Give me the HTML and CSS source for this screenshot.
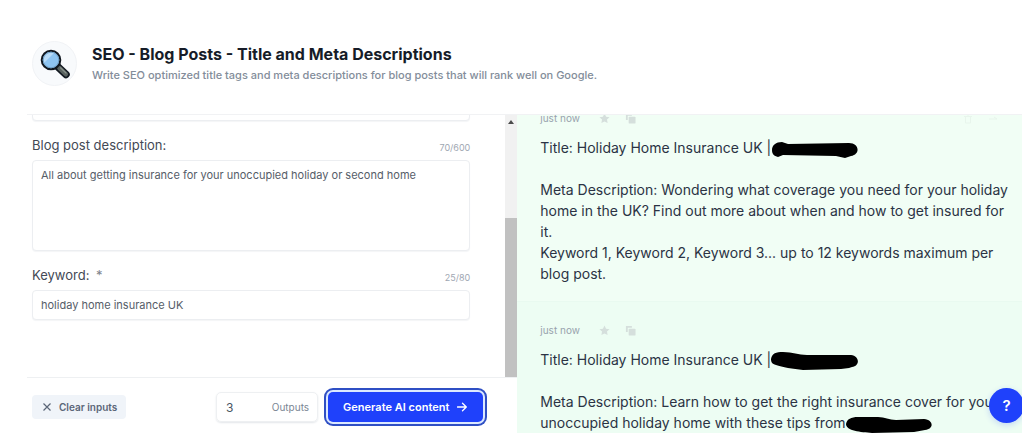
FILE: index.html
```html
<!DOCTYPE html>
<html lang="en">
<head>
    <meta charset="UTF-8">
    <meta name="viewport" content="width=device-width, initial-scale=1.0">
    <title>SEO - Blog Posts - Title and Meta Descriptions</title>
    <link rel="stylesheet" href="styles.css">
</head>
<body>
    <header class="header">
        <div class="tool-icon">
            <svg width="32" height="32" viewBox="0 0 32 32" aria-hidden="true">
                <path d="M18 18l9 8.500" stroke="#111820" stroke-width="7.500" stroke-linecap="round"/>
                <path d="M20.500 20.200l6.300 6" stroke="#59625f" stroke-width="4.600" stroke-linecap="round"/>
                <path d="M21.500 19.800l5.500 5.200" stroke="#87918b" stroke-width="1.200" stroke-linecap="round"/>
                <circle cx="12" cy="12" r="9.300" fill="#8ec5f2" stroke="#111820" stroke-width="2"/>
                <path d="M5 15a7.500 7.500 0 0 1 10-10z" fill="#b9dcf8"/>
                <circle cx="12" cy="12" r="7.800" fill="none" stroke="#6f9ec4" stroke-width="1"/>
            </svg>
        </div>
        <div>
            <h1 class="title">SEO - Blog Posts - Title and Meta Descriptions</h1>
            <p class="subtitle">Write SEO optimized title tags and meta descriptions for blog posts that will rank well on Google.</p>
        </div>
    </header>

    <main class="main">
        <form class="editor">
            <div class="editor-body">
                <div class="fields">
                    <input class="input" type="text" aria-label="Blog post title">
                    <div class="field-head">
                        <label for="description">Blog post description:</label>
                        <span class="counter">70/600</span>
                    </div>
                    <textarea class="input textarea" id="description">All about getting insurance for your unoccupied holiday or second home</textarea>
                    <div class="field-head">
                        <label for="keyword">Keyword: <span class="required">*</span></label>
                        <span class="counter">25/80</span>
                    </div>
                    <input class="input" type="text" id="keyword" value="holiday home insurance UK">
                </div>
                <div class="scrollbar">
                    <svg width="6" height="4" viewBox="0 0 6 4" aria-hidden="true"><path d="M0 4l3-4 3 4z" fill="#4b4b4b"/></svg>
                    <div class="thumb"></div>
                </div>
            </div>
            <div class="actions">
                <button class="clear" type="button">
                    <svg width="8" height="8" viewBox="0 0 8 8" aria-hidden="true"><path d="M.5.5l7 7M7.500.5l-7 7" stroke="#5b6678" stroke-width="1.200"/></svg>
                    Clear inputs
                </button>
                <div class="outputs">
                    <input id="outputs" type="text" value="3">
                    <label for="outputs">Outputs</label>
                </div>
                <button class="generate" type="button">
                    Generate AI content
                    <svg width="10" height="10" viewBox="0 0 10 10" aria-hidden="true"><path d="M.5 5h8.500M5.500 1.200L9.300 5 5.500 8.800" fill="none" stroke="#fff" stroke-width="1.300" stroke-linecap="round" stroke-linejoin="round"/></svg>
                </button>
            </div>
        </form>

        <section class="results">
            <article class="result result-first">
                <div class="meta">
                    <span>just now</span>
                    <svg class="meta-icon" width="11" height="11" viewBox="0 0 12 12" aria-hidden="true"><path d="M6 .5l1.700 3.500 3.800.5-2.800 2.700.7 3.800L6 9.200 2.600 11l.7-3.800L.5 4.500 4.300 4z"/></svg>
                    <svg class="meta-icon" width="11" height="11" viewBox="0 0 12 12" aria-hidden="true"><path d="M1 1h6.500v2H3v4.500H1z"/><rect x="4" y="4" width="7.500" height="7.500" rx="1"/></svg>
                    <span class="meta-end">
                        <svg width="10" height="10" viewBox="0 0 10 10" aria-hidden="true"><path d="M1 2.500h8M2.500 3v6h5V3M4 1h2"/></svg>
                        <svg width="10" height="10" viewBox="0 0 10 10" aria-hidden="true"><path d="M1 5h8M6 3l3 2"/></svg>
                    </span>
                </div>
                <p>Title: Holiday Home Insurance UK |<svg class="redacted" width="88" height="16" viewBox="0 0 88 16" aria-hidden="true"><path d="M1 8C1 3 5 0 11 0L17 2 78 1C88 1 90 12 80 14L74 16 65 14 12 13 7 15C3 14 1 12 1 8z"/></svg></p>
                <br>
                <p>Meta Description: Wondering what coverage you need for your holiday home in the UK? Find out more about when and how to get insured for it.</p>
                <p>Keyword 1, Keyword 2, Keyword 3... up to 12 keywords maximum per blog post.</p>
            </article>
            <article class="result">
                <div class="meta">
                    <span>just now</span>
                    <svg class="meta-icon" width="11" height="11" viewBox="0 0 12 12" aria-hidden="true"><path d="M6 .5l1.700 3.500 3.800.5-2.800 2.700.7 3.800L6 9.200 2.600 11l.7-3.800L.5 4.500 4.300 4z"/></svg>
                    <svg class="meta-icon" width="11" height="11" viewBox="0 0 12 12" aria-hidden="true"><path d="M1 1h6.500v2H3v4.500H1z"/><rect x="4" y="4" width="7.500" height="7.500" rx="1"/></svg>
                </div>
                <p>Title: Holiday Home Insurance UK |<svg class="redacted" width="88" height="18" viewBox="0 0 88 18" aria-hidden="true"><path d="M0 7C1 1 5 0 12 0C22 0 27 3 36 3L80 3C89 4 89 14 81 15L78 16 70 17 32 18C22 17 11 15 5 13C1 12 0 10 0 7z"/></svg></p>
                <br>
                <p>Meta Description: Learn how to get the right insurance cover for your unoccupied holiday home with these tips from<svg class="redacted" width="86" height="16" viewBox="0 0 86 16" aria-hidden="true"><path d="M0 7C1 2 5 0 12 0L32 0C39 0 43 3 50 3L78 2C88 3 88 12 79 13L68 15 26 16C15 15 0 14 0 7z"/></svg></p>
            </article>
            <button class="help" type="button" aria-label="Help">?</button>
        </section>
    </main>
</body>
</html>
```
FILE: styles.css
```css
* {
    margin: 0;
    padding: 0;
    box-sizing: border-box;
}

body {
    font-family: Inter, 'Liberation Sans', sans-serif;
    background: white;
    color: #2b3344;
    height: 100vh;
    padding: 0 2px 2px 27px;
    display: flex;
    flex-direction: column;
    overflow: hidden;
}

button, input, textarea {
    font: inherit;
    color: inherit;
    border: none;
    outline: none;
}

svg {
    flex-shrink: 0;
}

.header {
    display: flex;
    align-items: center;
    gap: 15px;
    padding: 41px 5px 28px;
    border-bottom: 1px solid #f1f2f4;
}

.tool-icon {
    width: 45px;
    height: 45px;
    border: 1px solid #f1f3f6;
    border-radius: 50%;
    background: #f8fafc;
    display: flex;
    align-items: center;
    justify-content: center;
}

.title {
    font-size: 16px;
    line-height: 22px;
    font-weight: 700;
    color: #161c28;
}

.subtitle {
    font-size: 11px;
    line-height: 20px;
    font-weight: 500;
    color: #838d9a;
}

.main {
    flex: 1;
    min-height: 0;
    display: grid;
    grid-template-columns: 34fr 35fr;
    grid-template-rows: minmax(0, 1fr);
}

.editor {
    display: flex;
    flex-direction: column;
    min-height: 0;
}

.editor-body {
    flex: 1;
    min-height: 0;
    display: flex;
    border-bottom: 1px solid #eef0f2;
}

.fields {
    flex: 1;
    min-width: 0;
    display: flex;
    flex-direction: column;
    justify-content: flex-end;
    overflow: hidden;
    padding: 0 35px 57px 5px;
}

.input {
    display: block;
    flex-shrink: 0;
    width: 100%;
    height: 30px;
    padding: 0 8px;
    border: 1px solid #eceef1;
    border-radius: 4px;
    background: white;
    box-shadow: 0 1px 1px #f4f5f7;
    font-size: 11px;
    color: #565d68;
}

.textarea {
    height: 91px;
    padding: 5px 8px;
    line-height: 18px;
    resize: none;
}

.field-head {
    flex-shrink: 0;
    display: flex;
    justify-content: space-between;
    padding: 14px 0 5px;
    font-size: 13px;
    line-height: 20px;
    color: #434955;
}

.required {
    margin-left: 3px;
    color: #7d828b;
}

.counter {
    align-self: flex-end;
    font-size: 9px;
    line-height: 14px;
    color: #a0a7b2;
}

.scrollbar {
    width: 12px;
    background: #f1f1f1;
    display: flex;
    flex-direction: column;
    align-items: center;
    justify-content: space-between;
    padding-top: 5px;
}

.thumb {
    width: 100%;
    height: 62%;
    background: #c1c1c1;
}

.actions {
    display: flex;
    align-items: center;
    gap: 10px;
    padding: 12px 34px 9px 5px;
}

.clear {
    display: flex;
    align-items: center;
    gap: 8px;
    height: 24px;
    margin-right: auto;
    padding: 0 9px 0 11px;
    border-radius: 4px;
    background: #f0f4f9;
    font-size: 10px;
    font-weight: 600;
    color: #5b6678;
}

.outputs {
    display: flex;
    align-items: center;
    width: 102px;
    height: 30px;
    padding: 0 8px 0 9px;
    border: 1px solid #eef0f2;
    border-radius: 5px;
    box-shadow: 0 1px 2px #e3e6ea;
    font-size: 10px;
    color: #7b8694;
}

.outputs input {
    flex: 1;
    min-width: 0;
    font-size: 12px;
    color: #4b5563;
}

.generate {
    display: flex;
    align-items: center;
    gap: 8px;
    height: 30px;
    margin: 2px 0;
    padding: 0 16px 0 15px;
    border-radius: 5px;
    background: #1f41fb;
    box-shadow: 0 0 0 2px #dbe8ff, 0 0 0 4px #2f4fc4;
    font-size: 11px;
    font-weight: 600;
    color: white;
}

.results {
    position: relative;
    display: flex;
    flex-direction: column;
    justify-content: flex-end;
    overflow: hidden;
    background: #edfdf3;
}

.result {
    flex-shrink: 0;
    padding: 20px 8px 0 23px;
    font-size: 14px;
    line-height: 21px;
}

.result-first {
    padding-bottom: 17px;
    border-bottom: 1px solid #e9faf0;
    background: #f1fef5;
}

.meta {
    display: flex;
    align-items: center;
    gap: 15px;
    height: 17px;
    margin-bottom: 10px;
    font-size: 10px;
    color: #98a3ad;
}

.meta span:first-child {
    margin-right: 4px;
}

.meta-icon {
    fill: #d5dfdc;
}

.meta-end {
    display: flex;
    gap: 15px;
    margin-left: auto;
    padding-right: 16px;
    stroke: #e8f5ec;
    fill: none;
}

.redacted {
    vertical-align: -1px;
    margin: -4px 0;
    fill: black;
}

/* sits on top of the results, cut off by the right edge */
.help {
    position: absolute;
    right: -2px;
    bottom: 10px;
    width: 35px;
    height: 35px;
    border-radius: 50%;
    background: #1f41fb;
    box-shadow: 0 2px 6px rgba(31, 65, 251, 0.2);
    font-size: 15px;
    font-weight: 600;
    color: white;
}
```
